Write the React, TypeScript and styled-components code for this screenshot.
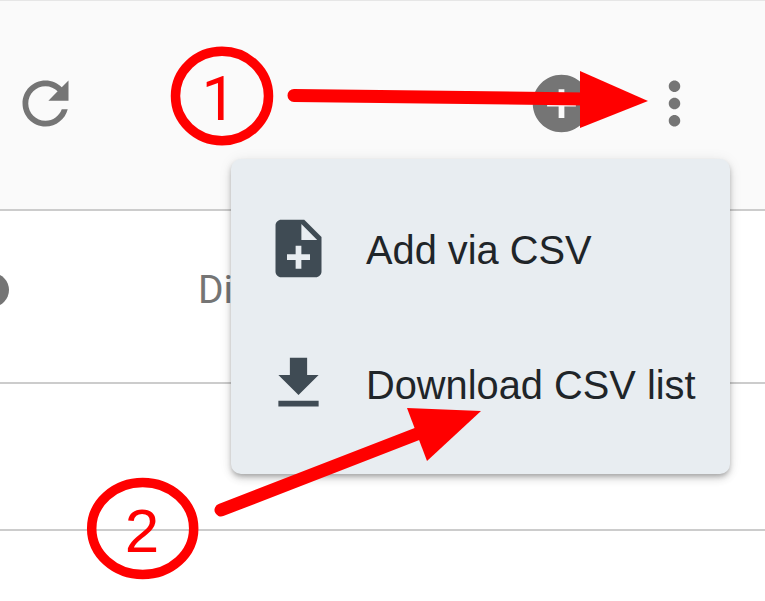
import React from 'react'
import styled, { createGlobalStyle } from 'styled-components'

const GlobalStyle = createGlobalStyle`
  html, body {
    margin: 0;
    padding: 0;
    height: 601px;
    overflow: hidden;
    background: #fff;
    font-family: "Liberation Sans", Arial, sans-serif;
  }
`

const Page = styled.div`
  position: relative;
  width: 765px;
  height: 601px;
  overflow: hidden;
  background: #fff;
`

const Toolbar = styled.div`
  display: flex;
  align-items: center;
  box-sizing: border-box;
  height: 209px;
  padding: 0 56px 4px 11px;
  background: #fafafa;
  border-top: 1px solid #e6e6e6;
`

const ToolbarActions = styled.div`
  display: flex;
  align-items: center;
  gap: 44px;
  margin-left: auto;
`

const ToolIcon = styled.svg`
  display: block;
  width: 69px;
  height: 69px;
  fill: #757575;
`

const Row = styled.div<{ $height: number }>`
  display: flex;
  align-items: center;
  box-sizing: border-box;
  height: ${p => p.$height}px;
  padding-bottom: 14px;
  border-top: 2px solid #cccccc;
`

const Avatar = styled.div`
  flex: none;
  width: 34px;
  height: 34px;
  margin: 0 189px 0 -25px;
  border-radius: 50%;
  background: #757575;
`

const Cell = styled.span`
  font-family: Roboto, "Liberation Sans", sans-serif;
  font-size: 39px;
  color: #757575;
`

const Menu = styled.div`
  position: absolute;
  top: 159px;
  left: 231px;
  box-sizing: border-box;
  width: 499px;
  height: 315px;
  padding: 24px 0 22px;
  border-radius: 10px;
  background: #e8edf1;
  box-shadow: 0 3px 5px -1px rgba(0, 0, 0, 0.25), 0 5px 8px 0 rgba(0, 0, 0, 0.12), 0 1px 14px 0 rgba(0, 0, 0, 0.08);
`

const MenuItem = styled.div`
  display: flex;
  align-items: center;
  gap: 33px;
  height: 135px;
  padding-left: 33px;
  font-size: 39.8px;
  color: #1f2529;
`

const MenuIcon = styled.svg`
  display: block;
  flex: none;
  width: 69px;
  height: 69px;
  margin-top: -4px;
  fill: #3f4b54;
`

const Annotations = styled.svg`
  position: absolute;
  top: 0;
  left: 0;
  width: 765px;
  height: 601px;
  pointer-events: none;
`

const Ring = styled.ellipse`
  fill: none;
  stroke: #ff0000;
  stroke-width: 9.5;
`

const Shaft = styled.line`
  stroke: #ff0000;
  stroke-width: 13;
  stroke-linecap: round;
`

const Head = styled.polygon`
  fill: #ff0000;
`

const Digit = styled.text<{ $font: string }>`
  font-family: ${p => p.$font}, sans-serif;
  font-size: 62px;
  fill: #ff0000;
  text-anchor: middle;
`

const App = () => (
  <Page>
    <GlobalStyle />
    <Toolbar>
      <ToolIcon viewBox="0 0 24 24">
        <path d="M17.65 6.35C16.2 4.9 14.21 4 12 4c-4.42 0-7.99 3.58-7.99 8s3.57 8 7.99 8c3.73 0 6.84-2.55 7.73-6h-2.08c-.82 2.33-3.04 4-5.65 4-3.31 0-6-2.69-6-6s2.69-6 6-6c1.66 0 3.14.69 4.22 1.78L13 11h7V4l-2.35 2.35z" />
      </ToolIcon>
      <ToolbarActions>
        <ToolIcon viewBox="0 0 24 24">
          <path d="M12 2C6.48 2 2 6.48 2 12s4.48 10 10 10 10-4.48 10-10S17.52 2 12 2zm5 11h-4v4h-2v-4H7v-2h4V7h2v4h4v2z" />
        </ToolIcon>
        <ToolIcon viewBox="0 0 24 24">
          <path d="M12 8c1.1 0 2-.9 2-2s-.9-2-2-2-2 .9-2 2 .9 2 2 2zm0 2c-1.1 0-2 .9-2 2s.9 2 2 2 2-.9 2-2-.9-2-2-2zm0 6c-1.1 0-2 .9-2 2s.9 2 2 2 2-.9 2-2-.9-2-2-2z" />
        </ToolIcon>
      </ToolbarActions>
    </Toolbar>
    <Row $height={173}>
      <Avatar />
      <Cell>Disabled</Cell>
    </Row>
    <Row $height={147} />
    <Row $height={72} />

    <Menu>
      <MenuItem>
        <MenuIcon viewBox="0 0 24 24">
          <path d="M14 2H6c-1.1 0-1.99.9-1.99 2L4 20c0 1.1.89 2 1.99 2H18c1.1 0 2-.9 2-2V8l-6-6zm2 14h-3v3h-2v-3H8v-2h3v-3h2v3h3v2zm-3-7V3.5L18.5 9H13z" />
        </MenuIcon>
        Add via CSV
      </MenuItem>
      <MenuItem>
        <MenuIcon viewBox="0 0 24 24">
          <path d="M19 9h-4V3H9v6H5l7 7 7-7zM5 18v2h14v-2H5z" />
        </MenuIcon>
        Download CSV list
      </MenuItem>
    </Menu>

    <Annotations viewBox="0 0 765 601">
      <Ring cx={222} cy={96} rx={46.5} ry={44.7} />
      <Digit $font="Roboto" x={219} y={120}>1</Digit>
      <Shaft x1={294} y1={95.5} x2={585} y2={99} />
      <Head points="580,71 648,101 580,128" />
      <Ring cx={142.7} cy={528.5} rx={51} ry={46} />
      <Digit $font='"Liberation Sans"' x={142} y={552}>2</Digit>
      <Shaft x1={221} y1={510} x2={417} y2={434} />
      <Head points="407,408 481,411 427,461" />
    </Annotations>
  </Page>
)

export default App
